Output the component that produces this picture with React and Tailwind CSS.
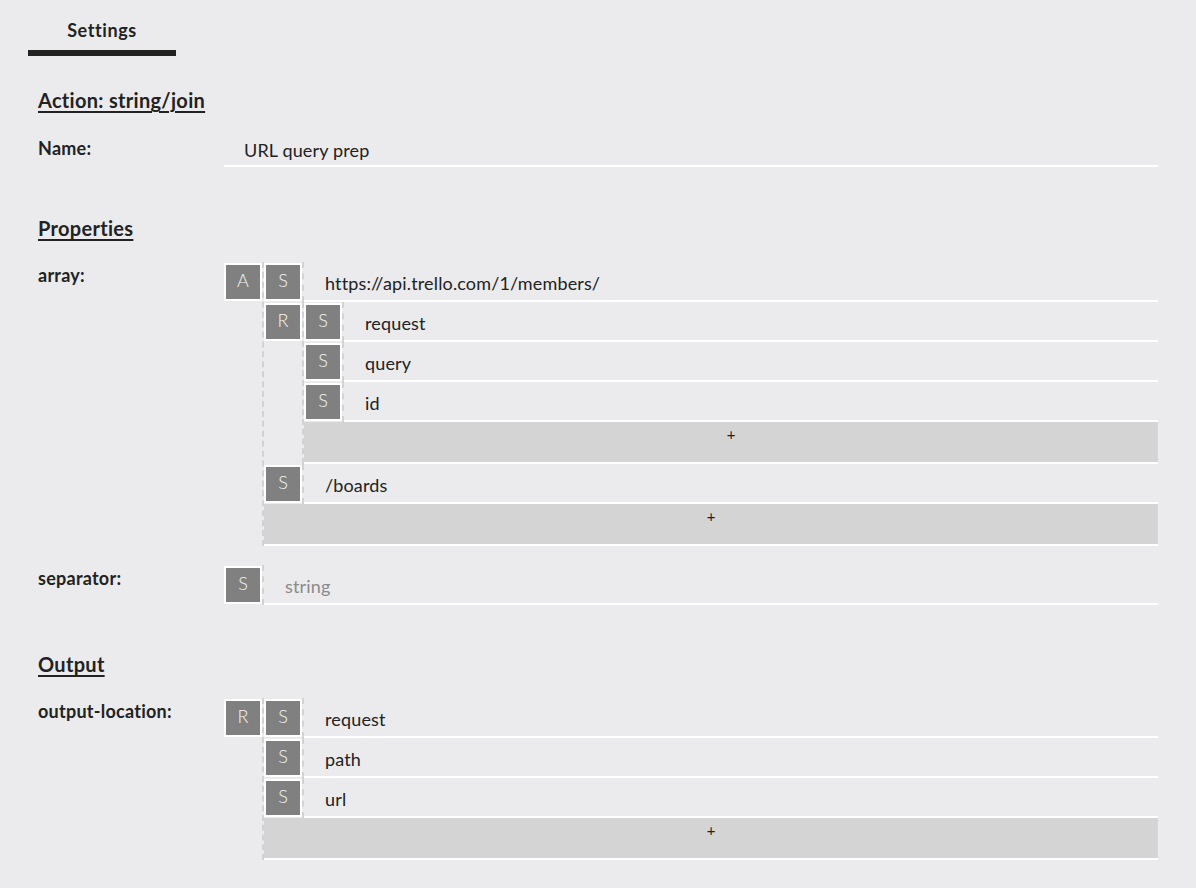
const Badge = ({ l }) => (
  <div className="mt-px h-[38px] w-[38px] shrink-0 border-2 border-white bg-[#808080] text-center text-[18px] font-light leading-[30px] text-[#f4f4f4]">
    {l}
  </div>
);

const AddRow = () => (
  <div className="h-[42px] border-b-2 border-white bg-[#d4d4d4] pt-[2px] text-center text-[15px] leading-[20px] text-[#222]">
    +
  </div>
);

function StringRow({ text, placeholder }) {
  return (
    <div className="flex">
      <Badge l="S" />
      <div className="flex-1 border-l-2 border-dashed border-[#d2d2d4]">
        <div
          className={`h-[40px] border-b-2 border-white pl-[21px] pt-[9px] text-[18px] leading-[24px] tracking-[0.15px] ${
            placeholder ? "text-[#8a8a8a]" : "text-[#222]"
          }`}
        >
          {text || placeholder}
        </div>
      </div>
    </div>
  );
}

function ListRow({ l, children }) {
  return (
    <div className="flex">
      <Badge l={l} />
      <div className="flex-1 border-l-2 border-dashed border-[#d2d2d4]">
        {children}
        <AddRow />
      </div>
    </div>
  );
}

function Field({ label, children, className = "" }) {
  return (
    <div className={`flex ${className}`}>
      <div className="w-[186px] shrink-0 pt-[2px] text-[18px] font-bold leading-[22px] tracking-[0.25px]">{label}</div>
      <div className="flex-1">{children}</div>
    </div>
  );
}

const Heading = ({ children, className = "" }) => (
  <div className={`text-[20px] font-bold leading-[24px] tracking-[0.3px] underline decoration-2 underline-offset-[3px] ${className}`}>
    {children}
  </div>
);

export default function App() {
  return (
    <div className="min-h-screen bg-[#ebebed] font-['Lato','Noto_Sans',sans-serif] text-[#222]">
      {/* onglet */}
      <div className="pl-[28px]">
        <div className="w-[148px]">
          <div className="h-[50px] pt-[20px] text-center text-[18px] font-bold leading-[20px] tracking-[0.6px]">Settings</div>
          <div className="h-[6px] bg-[#222]" />
        </div>
      </div>

      <div className="px-[38px] pb-[30px]">
        <Heading className="mt-[32px]">Action: string/join</Heading>

        <div className="mt-[25px] flex">
          <div className="w-[186px] shrink-0 text-[18px] font-bold leading-[22px] tracking-[0.25px]">Name:</div>
          <div className="h-[30px] flex-1 border-b-2 border-white pl-[20px] pt-[2px] text-[18px] leading-[22px] tracking-[0.15px]">
            URL query prep
          </div>
        </div>

        <Heading className="mt-[49px]">Properties</Heading>

        <Field label="array:" className="mt-[22px]">
          <ListRow l="A">
            <StringRow text="https://api.trello.com/1/members/" />
            <ListRow l="R">
              <StringRow text="request" />
              <StringRow text="query" />
              <StringRow text="id" />
            </ListRow>
            <StringRow text="/boards" />
          </ListRow>
        </Field>

        <Field label="separator:" className="mt-[19px]">
          <StringRow placeholder="string" />
        </Field>

        <Heading className="mt-[47px]">Output</Heading>

        <Field label="output-location:" className="mt-[22px]">
          <ListRow l="R">
            <StringRow text="request" />
            <StringRow text="path" />
            <StringRow text="url" />
          </ListRow>
        </Field>
      </div>
    </div>
  );
}
